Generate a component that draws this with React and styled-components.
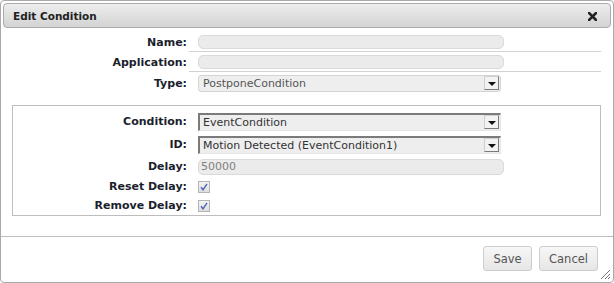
import React from "react";
import styled, { createGlobalStyle } from "styled-components";

const Global = createGlobalStyle`
  html, body { margin: 0; padding: 0; background: #fff; }
  body { font-family: "DejaVu Sans", Verdana, sans-serif; }
  * { box-sizing: border-box; }
`;

const Dialog = styled.div`
  width: 614px;
  height: 283px;
  border: 1px solid #a9a9a9;
  border-radius: 4px;
  padding: 2px;
  background: #fff;
  display: flex;
  flex-direction: column;
  position: relative;
`;

const TitleBar = styled.div`
  height: 25px;
  border: 1px solid #aaaaaa;
  border-radius: 4px;
  background: linear-gradient(#ededed, #d3d3d3);
  display: flex;
  align-items: center;
  justify-content: space-between;
  padding: 0 13px 0 9px;
`;

const Title = styled.span`
  font-size: 10.5px;
  font-weight: bold;
  color: #222;
`;

const CloseBtn = styled.span`
  display: flex;
  width: 9px;
  height: 9px;
  margin-top: 1px;
`;

const Body = styled.div`
  flex: 1;
  display: flex;
  flex-direction: column;
  margin: 0 -2px;
`;

const TopForm = styled.div`
  padding-top: 4px;
  margin-right: 12px;
`;

const Row = styled.div`
  display: grid;
  grid-template-columns: ${(p) => p.$label}px 1fr;
  column-gap: 2px;
  height: ${(p) => p.$h}px;
`;

const Label = styled.div`
  font-size: 11px;
  font-weight: bold;
  color: #1c1f2e;
  text-align: right;
  display: flex;
  align-items: center;
  justify-content: flex-end;
`;

const Cell = styled.div`
  display: flex;
  align-items: center;
  padding-left: ${(p) => p.$pad}px;
  border-bottom: ${(p) => (p.$line ? "1px solid #d2d2d2" : "none")};
`;

const TextBox = styled.div`
  width: 306px;
  height: ${(p) => p.$h || 14}px;
  background: #ebebeb;
  border: 1px solid #dadada;
  border-radius: 5px;
  font-size: 11px;
  color: #808080;
  display: flex;
  align-items: center;
  padding-left: 2px;
`;

const Select = styled.div`
  width: 303px;
  height: ${(p) => p.$h}px;
  background: #eeeeee;
  font-size: 11px;
  color: ${(p) => (p.$inset ? "#333" : "#555")};
  display: flex;
  align-items: center;
  justify-content: space-between;
  padding-left: ${(p) => (p.$inset ? 3 : 4)}px;
  padding-right: 1px;
  border-radius: ${(p) => (p.$inset ? 0 : 3)}px;
  border-top: ${(p) => (p.$inset ? "2px solid #7b7b7b" : "1px solid #d4d4d4")};
  border-left: ${(p) => (p.$inset ? "2px solid #7b7b7b" : "1px solid #d4d4d4")};
  border-right: 1px solid ${(p) => (p.$inset ? "#e6e6e6" : "#d4d4d4")};
  border-bottom: 1px solid ${(p) => (p.$inset ? "#e6e6e6" : "#d4d4d4")};
`;

const ArrowBtn = styled.span`
  width: 15px;
  height: 14px;
  border: 1px solid #7a7a7a;
  border-top-color: #cfcfcf;
  border-left-color: #cfcfcf;
  background: #f2f2f2;
  display: flex;
  align-items: center;
  justify-content: center;
  &::after {
    content: "";
    border-left: 4px solid transparent;
    border-right: 4px solid transparent;
    border-top: 4px solid #111;
    margin-top: 1px;
  }
`;

const Box = styled.div`
  margin: 11px 12px 0 11px;
  border: 1px solid #bdbdbd;
  padding: 4px 0 0;
`;

const Check = styled.span`
  width: 12px;
  height: 12px;
  border: 1px solid #b4b4b4;
  background: linear-gradient(#f4f4f4, #dedede);
  display: flex;
  align-items: center;
  justify-content: center;
`;

const Footer = styled.div`
  margin-top: auto;
  border-top: 1px solid #bdbdbd;
  height: 44px;
  display: flex;
  justify-content: flex-end;
  align-items: flex-start;
  padding: 9px 15px 0 0;
  gap: 7px;
`;

const Button = styled.button`
  height: 25px;
  width: ${(p) => p.$w}px;
  border: 1px solid #cdcdcd;
  border-radius: 3px;
  background: linear-gradient(#f7f7f7, #e6e6e6);
  font-family: "DejaVu Sans", Verdana, sans-serif;
  font-size: 11.5px;
  color: #555;
  padding: 0;
`;

const Grip = styled.svg`
  position: absolute;
  right: 2px;
  bottom: 2px;
`;

const CheckMark = () => (
  <svg width="8" height="8" viewBox="0 0 8 8">
    <path d="M1 4.3 L3 6.8 L7 0.8" stroke="#4a62b8" strokeWidth="1.4" fill="none" />
  </svg>
);

export default function App() {
  return (
    <>
      <Global />
      <Dialog>
        <TitleBar>
          <Title>Edit Condition</Title>
          <CloseBtn>
            <svg width="9" height="9" viewBox="0 0 9 9">
              <path d="M1 1 L8 8 M8 1 L1 8" stroke="#222" strokeWidth="2.6" strokeLinecap="square" />
            </svg>
          </CloseBtn>
        </TitleBar>
        <Body>
          <TopForm>
            <Row $label={186} $h={20}>
              <Label>Name:</Label>
              <Cell $pad={9} $line>
                <TextBox />
              </Cell>
            </Row>
            <Row $label={186} $h={20}>
              <Label>Application:</Label>
              <Cell $pad={9} $line>
                <TextBox />
              </Cell>
            </Row>
            <Row $label={186} $h={22}>
              <Label>Type:</Label>
              <Cell $pad={9}>
                <Select $h={17}>
                  PostponeCondition
                  <ArrowBtn />
                </Select>
              </Cell>
            </Row>
          </TopForm>
          <Box>
            <Row $label={174} $h={23}>
              <Label>Condition:</Label>
              <Cell $pad={9}>
                <Select $inset $h={18}>
                  EventCondition
                  <ArrowBtn />
                </Select>
              </Cell>
            </Row>
            <Row $label={174} $h={23}>
              <Label>ID:</Label>
              <Cell $pad={9}>
                <Select $inset $h={18}>
                  Motion Detected (EventCondition1)
                  <ArrowBtn />
                </Select>
              </Cell>
            </Row>
            <Row $label={174} $h={21}>
              <Label>Delay:</Label>
              <Cell $pad={9}>
                <TextBox $h={16}>50000</TextBox>
              </Cell>
            </Row>
            <Row $label={174} $h={19}>
              <Label>Reset Delay:</Label>
              <Cell $pad={9}>
                <Check>
                  <CheckMark />
                </Check>
              </Cell>
            </Row>
            <Row $label={174} $h={19}>
              <Label>Remove Delay:</Label>
              <Cell $pad={9}>
                <Check>
                  <CheckMark />
                </Check>
              </Cell>
            </Row>
          </Box>
          <Footer>
            <Button $w={49}>Save</Button>
            <Button $w={59}>Cancel</Button>
          </Footer>
        </Body>
        <Grip width="12" height="12" viewBox="0 0 12 12">
          <path d="M11 2 L2 11 M11 6 L6 11 M11 9 L9 11" stroke="#777" strokeWidth="1" />
        </Grip>
      </Dialog>
    </>
  );
}
